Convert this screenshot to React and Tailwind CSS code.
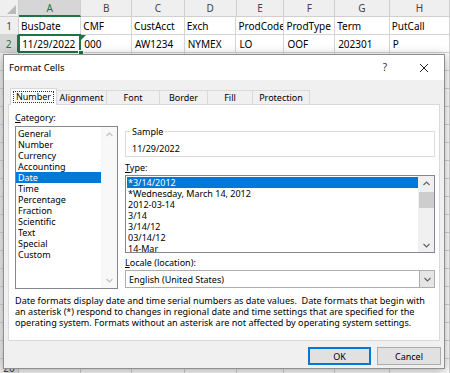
import React from "react";

const columns = [
  { label: "A", w: 65, r1: "BusDate", r2: "11/29/2022" },
  { label: "B", w: 53, r1: "CMF", r2: "000" },
  { label: "C", w: 55, r1: "CustAcct", r2: "AW1234" },
  { label: "D", w: 54, r1: "Exch", r2: "NYMEX" },
  { label: "E", w: 50, r1: "ProdCode", r2: "LO" },
  { label: "F", w: 53, r1: "ProdType", r2: "OOF" },
  { label: "G", w: 57, r1: "Term", r2: "202301" },
  { label: "H", w: 63, r1: "PutCall", r2: "P" },
];

const categories = [
  "General",
  "Number",
  "Currency",
  "Accounting",
  "Date",
  "Time",
  "Percentage",
  "Fraction",
  "Scientific",
  "Text",
  "Special",
  "Custom",
];

const types = [
  "*3/14/2012",
  "*Wednesday, March 14, 2012",
  "2012-03-14",
  "3/14",
  "3/14/12",
  "03/14/12",
  "14-Mar",
];

const tabs = [
  { label: "Number", w: 47 },
  { label: "Alignment", w: 50 },
  { label: "Font", w: 53 },
  { label: "Border", w: 48 },
  { label: "Fill", w: 45 },
  { label: "Protection", w: 57 },
];

const Chevron = ({ up, color = "#606060" }) => (
  <svg width="7" height="5" viewBox="0 0 7 5">
    <polyline
      points={up ? "0.5,4 3.5,1 6.5,4" : "0.5,1 3.5,4 6.5,1"}
      fill="none"
      stroke={color}
      strokeWidth="1.1"
    />
  </svg>
);

const Sheet = () => {
  const extraRows = Array.from({ length: 18 }, (_, i) => i + 3);
  return (
    <div className="font-['Noto_Sans',sans-serif] text-[10px] leading-[14px] text-black bg-white">
      {/* column headers */}
      <div className="flex h-[17px] bg-[#efefef] border-b border-[#cfcfcf]">
        <div className="relative w-[20px] border-r border-[#cfcfcf]">
          <div className="absolute right-[2px] bottom-[2px] w-0 h-0 border-l-[9px] border-l-transparent border-b-[9px] border-b-[#b9b9b9]" />
        </div>
        {columns.map((c, i) => (
          <div
            key={c.label}
            style={{ width: c.w }}
            className={
              i === 0
                ? "flex items-center justify-center border-r border-[#cfcfcf] bg-[#d6d6d6] text-[#217346] border-b-2 border-b-[#217346] -mb-px"
                : "flex items-center justify-center border-r border-[#cfcfcf] text-[#444]"
            }
          >
            {c.label}
          </div>
        ))}
      </div>
      {/* row 1 */}
      <div className="flex h-[18px] border-b border-[#d4d4d4]">
        <div className="w-[20px] bg-[#efefef] border-r border-[#cfcfcf] flex items-center justify-center text-[#444]">
          1
        </div>
        {columns.map((c) => (
          <div
            key={c.label}
            style={{ width: c.w }}
            className="flex items-center px-[2px] border-r border-[#d4d4d4] whitespace-nowrap overflow-hidden"
          >
            {c.r1}
          </div>
        ))}
      </div>
      {/* row 2 */}
      <div className="flex h-[18px] border-b border-[#d4d4d4]">
        <div className="w-[20px] bg-[#d6d6d6] border-r-2 border-[#217346] flex items-center justify-center text-[#217346]">
          2
        </div>
        {columns.map((c, i) => (
          <div
            key={c.label}
            style={{ width: c.w }}
            className="relative flex items-center px-[3px] border-r border-[#d4d4d4] whitespace-nowrap"
          >
            {c.r2}
            {i === 0 && (
              <>
                <div className="absolute -left-px -top-px -right-px -bottom-px border-2 border-[#217346]" />
                <div className="absolute -right-[4px] -bottom-[4px] w-[6px] h-[6px] bg-[#217346] border border-white" />
              </>
            )}
            {i === 1 && (
              <div className="absolute left-0 top-0 w-0 h-0 border-r-[5px] border-r-transparent border-t-[5px] border-t-[#217346]" />
            )}
          </div>
        ))}
      </div>
      {extraRows.map((r) => (
        <div key={r} className="flex h-[18px] border-b border-[#d4d4d4]">
          <div className="w-[20px] bg-[#efefef] border-r border-[#cfcfcf] flex items-center justify-center text-[#444]">
            {r}
          </div>
          {columns.map((c) => (
            <div
              key={c.label}
              style={{ width: c.w }}
              className="border-r border-[#d4d4d4]"
            />
          ))}
        </div>
      ))}
    </div>
  );
};

const FormatCellsDialog = () => (
  <div className="absolute left-[3px] top-[54px] w-[442px] h-[315px] flex flex-col bg-[#f0f0f0] border border-[#8f8f8f] shadow-[0_2px_10px_rgba(0,0,0,0.35)] font-['Noto_Sans',sans-serif] text-[9px] leading-[11px] text-black">
    {/* title bar */}
    <div className="h-[25px] bg-white flex items-center pl-[5px] text-[9.5px]">
      <span className="flex-1">Format Cells</span>
      <span className="w-[12px] text-center mr-[28px] text-[10px] text-[#333]">?</span>
      <svg width="10" height="10" viewBox="0 0 10 10" className="mr-[15px]">
        <path d="M1 1 L9 9 M9 1 L1 9" stroke="#222" strokeWidth="1" />
      </svg>
    </div>

    {/* tabs */}
    <div className="flex items-end h-[24px] mx-[4px] pl-[2px]">
      {tabs.map((t, i) =>
        i === 0 ? (
          <div
            key={t.label}
            style={{ width: t.w }}
            className="relative z-10 h-[17px] -mb-px bg-white border border-b-0 border-[#d9d9d9] flex items-center justify-center"
          >
            <span className="border border-dotted border-[#333] px-[2px] leading-[10px]">
              {t.label}
            </span>
          </div>
        ) : (
          <div
            key={t.label}
            style={{ width: t.w }}
            className="h-[14px] border-t border-r border-[#d9d9d9] flex items-center justify-center"
          >
            {t.label}
          </div>
        )
      )}
    </div>

    {/* tab panel */}
    <div className="mx-[4px] h-[237px] bg-white border border-[#d9d9d9] flex flex-col">
      <div className="flex pl-[6px]">
        {/* category */}
        <div className="w-[103px] flex flex-col">
          <div className="mt-[7px] h-[11px]">
            <span className="underline">C</span>ategory:
          </div>
          <div className="mt-[3px] h-[163px] border border-[#828790] flex">
            <div className="flex-1 pt-px">
              {categories.map((c) => (
                <div
                  key={c}
                  className={
                    c === "Date"
                      ? "h-[11px] pl-[2px] bg-[#0078d7] text-white"
                      : "h-[11px] pl-[2px]"
                  }
                >
                  {c}
                </div>
              ))}
            </div>
            <div className="w-[16px] bg-[#f8f8f8] flex flex-col items-center justify-between py-[5px]">
              <Chevron up color="#c0c0c0" />
              <Chevron color="#c0c0c0" />
            </div>
          </div>
        </div>

        {/* right side */}
        <div className="ml-[7px] w-[310px] flex flex-col">
          <div className="relative mt-[26px] h-[26px] border border-[#dcdcdc] pl-[6px] pt-[11px]">
            <span className="absolute left-[5px] -top-[6px] bg-white px-px">Sample</span>
            11/29/2022
          </div>
          <div className="mt-[5px] h-[11px]">
            <span className="underline">T</span>ype:
          </div>
          <div className="mt-[2px] h-[78px] border border-[#828790] flex">
            <div className="flex-1 pt-px pl-px">
              {types.map((t, i) => (
                <div
                  key={t}
                  className={
                    i === 0
                      ? "h-[11px] pl-px bg-[#0078d7] text-white"
                      : "h-[11px] pl-px"
                  }
                >
                  {t}
                </div>
              ))}
            </div>
            <div className="w-[16px] bg-[#f0f0f0] flex flex-col items-center">
              <div className="h-[14px] flex items-center">
                <Chevron up />
              </div>
              <div className="mt-[2px] w-[15px] h-[16px] bg-[#cdcdcd]" />
              <div className="flex-1" />
              <div className="h-[14px] flex items-center">
                <Chevron />
              </div>
            </div>
          </div>
          <div className="mt-[4px] h-[11px]">
            <span className="underline">L</span>ocale (location):
          </div>
          <div className="mt-[2px] h-[18px] border border-[#adadad] flex items-center">
            <span className="flex-1 pl-[3px]">English (United States)</span>
            <div className="w-[15px] h-full bg-[#e5e5e5] border-l border-[#adadad] flex items-center justify-center">
              <Chevron />
            </div>
          </div>
        </div>
      </div>

      <div className="mt-[6px] pl-[6px] whitespace-nowrap text-[9.1px]">
        <div>
          Date formats display date and time serial numbers as date values.&nbsp; Date formats that begin with
        </div>
        <div>
          an asterisk (*) respond to changes in regional date and time settings that are specified for the
        </div>
        <div>
          operating system. Formats without an asterisk are not affected by operating system settings.
        </div>
      </div>
    </div>

    {/* buttons */}
    <div className="flex justify-end gap-[6px] mt-[6px] mr-[3px]">
      <button className="w-[63px] h-[18px] bg-[#e1e1e1] border-2 border-[#0078d7] flex items-center justify-center">
        OK
      </button>
      <button className="w-[64px] h-[18px] bg-[#e1e1e1] border border-[#adadad] flex items-center justify-center">
        Cancel
      </button>
    </div>
  </div>
);

export default function App() {
  return (
    <div className="relative w-[450px] h-[373px] overflow-hidden bg-white">
      <Sheet />
      <FormatCellsDialog />
    </div>
  );
}
